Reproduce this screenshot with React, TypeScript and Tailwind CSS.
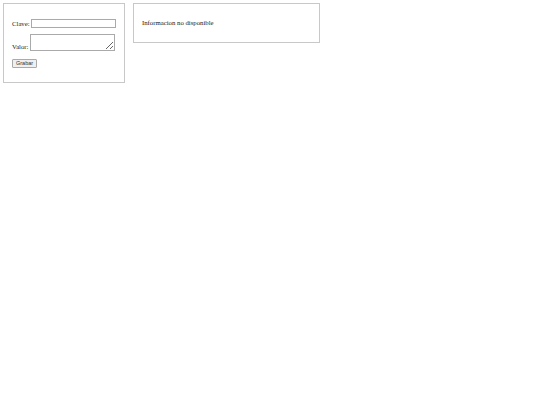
export default function App() {
  return (
    <div className="flex items-start gap-[8px] p-[3px] font-['Liberation_Serif',serif] text-[6.75px] leading-[1.15] text-[#222]">
      {/* formulario */}
      <form className="flex h-[80px] w-[122px] flex-col border border-[#c8c8c8] px-[8px] pt-[15px]">
        <label className="flex items-center gap-[1px]">
          Clave:
          <input
            type="text"
            className="h-[9px] w-[85px] border border-[#aaa] bg-white"
          />
        </label>
        <label className="mt-[6px] flex items-end gap-[1px]">
          Valor:
          <textarea className="h-[17px] w-[85px] resize border border-[#aaa] bg-white" />
        </label>
        <div className="mt-[8px]">
          <button
            type="button"
            className="h-[9px] rounded-[1px] border border-[#aaa] bg-[#efefef] px-[3px] text-[5.5px] leading-none text-[#333] font-['Liberation_Sans',sans-serif]"
          >
            Grabar
          </button>
        </div>
      </form>

      {/* resultado */}
      <div className="flex h-[40px] w-[187px] items-center border border-[#c8c8c8] px-[8px]">
        Informacion no disponible
      </div>
    </div>
  )
}
